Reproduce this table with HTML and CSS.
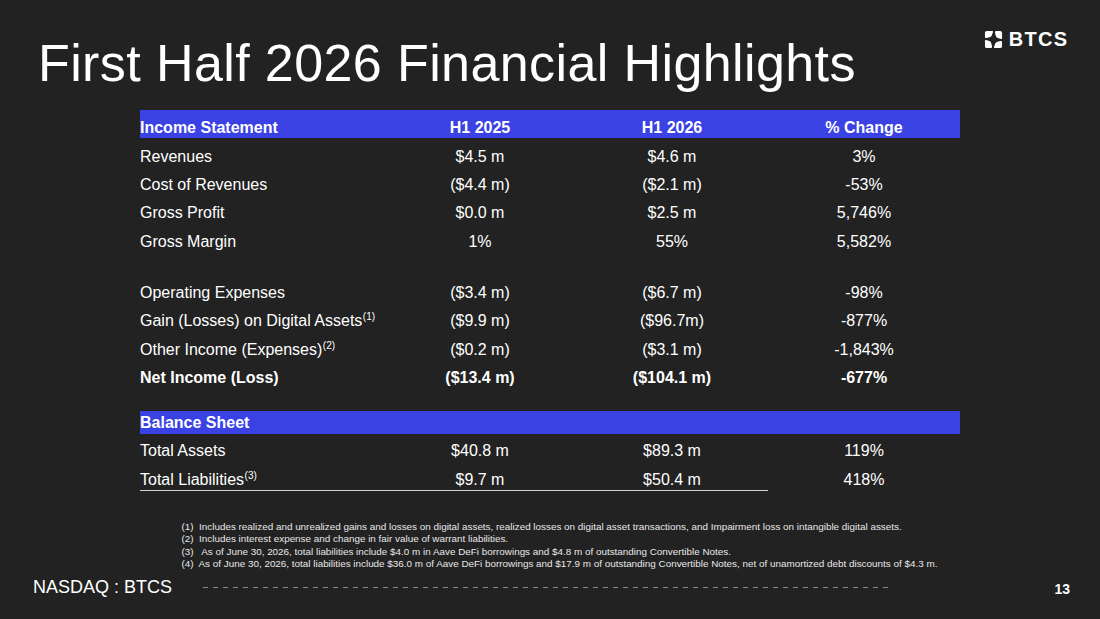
FILE: index.html
```html
<!DOCTYPE html>
<html lang="en">
<head>
<meta charset="utf-8">
<title>First Half 2026 Financial Highlights</title>
<link rel="stylesheet" href="styles.css">
</head>
<body>
<div class="slide">
  <header class="top">
    <h1 class="title">First Half 2026 Financial Highlights</h1>
    <div class="logo">
      <svg class="logo-mark" viewBox="0 0 20 20" width="19" height="19" aria-hidden="true">
        <g fill="#fff">
          <path d="M1 3 Q1 1 3 1 L8.8 1 Q9.8 1 9.5 2 L8.3 5.6 Q7.7 7.3 5.9 7.7 L2.6 8.5 Q1 8.8 1 7.2 Z"/>
          <path d="M1 3 Q1 1 3 1 L8.8 1 Q9.8 1 9.5 2 L8.3 5.6 Q7.7 7.3 5.9 7.7 L2.6 8.5 Q1 8.8 1 7.2 Z" transform="rotate(90 10 10)"/>
          <path d="M1 3 Q1 1 3 1 L8.8 1 Q9.8 1 9.5 2 L8.3 5.6 Q7.7 7.3 5.9 7.7 L2.6 8.5 Q1 8.8 1 7.2 Z" transform="rotate(180 10 10)"/>
          <path d="M1 3 Q1 1 3 1 L8.8 1 Q9.8 1 9.5 2 L8.3 5.6 Q7.7 7.3 5.9 7.7 L2.6 8.5 Q1 8.8 1 7.2 Z" transform="rotate(270 10 10)"/>
        </g>
      </svg>
      <span class="logo-text">BTCS</span>
    </div>
  </header>

  <section class="table">
    <div class="row head">
      <div>Income Statement</div><div class="c">H1 2025</div><div class="c">H1 2026</div><div class="c">% Change</div>
    </div>
    <div class="row first">
      <div>Revenues</div><div class="c">$4.5 m</div><div class="c">$4.6 m</div><div class="c">3%</div>
    </div>
    <div class="row">
      <div>Cost of Revenues</div><div class="c">($4.4 m)</div><div class="c">($2.1 m)</div><div class="c">-53%</div>
    </div>
    <div class="row">
      <div>Gross Profit</div><div class="c">$0.0 m</div><div class="c">$2.5 m</div><div class="c">5,746%</div>
    </div>
    <div class="row">
      <div>Gross Margin</div><div class="c">1%</div><div class="c">55%</div><div class="c">5,582%</div>
    </div>
    <div class="spacer-a"></div>
    <div class="row">
      <div>Operating Expenses</div><div class="c">($3.4 m)</div><div class="c">($6.7 m)</div><div class="c">-98%</div>
    </div>
    <div class="row">
      <div>Gain (Losses) on Digital Assets<sup>(1)</sup></div><div class="c">($9.9 m)</div><div class="c">($96.7m)</div><div class="c">-877%</div>
    </div>
    <div class="row">
      <div>Other Income (Expenses)<sup>(2)</sup></div><div class="c">($0.2 m)</div><div class="c">($3.1 m)</div><div class="c">-1,843%</div>
    </div>
    <div class="row bold">
      <div>Net Income (Loss)</div><div class="c">($13.4 m)</div><div class="c">($104.1 m)</div><div class="c">-677%</div>
    </div>
    <div class="spacer-b"></div>
    <div class="row subhead">
      <div>Balance Sheet</div><div></div><div></div><div></div>
    </div>
    <div class="row first">
      <div>Total Assets</div><div class="c">$40.8 m</div><div class="c">$89.3 m</div><div class="c">119%</div>
    </div>
    <div class="row last">
      <div class="rule">Total Liabilities<sup>(3)</sup></div><div class="c rule">$9.7 m</div><div class="c rule">$50.4 m</div><div class="c">418%</div>
    </div>
  </section>

  <section class="notes">
<p>(1)  Includes realized and unrealized gains and losses on digital assets, realized losses on digital asset transactions, and Impairment loss on intangible digital assets.</p>
<p>(2)  Includes interest expense and change in fair value of warrant liabilities.</p>
<p>(3)   As of June 30, 2026, total liabilities include $4.0 m in Aave DeFi borrowings and $4.8 m of outstanding Convertible Notes.</p>
<p>(4)  As of June 30, 2026, total liabilities include $36.0 m of Aave DeFi borrowings and $17.9 m of outstanding Convertible Notes, net of unamortized debt discounts of $4.3 m.</p>
  </section>

  <footer class="foot">
    <span class="ticker">NASDAQ : BTCS</span>
    <span class="dashes"></span>
    <span class="page">13</span>
  </footer>
</div>
</body>
</html>
```

FILE: styles.css
```css
html, body {
  margin: 0;
  padding: 0;
  background: #222222;
}

.slide {
  width: 1100px;
  height: 619px;
  background: #222222;
  color: #ffffff;
  font-family: "Liberation Sans", Arial, sans-serif;
  overflow: hidden;
}

.top {
  display: flex;
  justify-content: space-between;
  align-items: flex-start;
  padding: 28px 33px 0 38px;
  height: 82px;
}

.title {
  margin: 5px 0 0 0;
  font-size: 52px;
  font-weight: 400;
  line-height: 60px;
  letter-spacing: 0.4px;
  white-space: nowrap;
}

.logo {
  display: flex;
  align-items: center;
  gap: 6px;
  height: 20px;
  margin-top: 1px;
}

.logo-mark {
  display: block;
}

.logo-text {
  font-size: 20px;
  font-weight: 700;
  letter-spacing: 1.3px;
  line-height: 20px;
  margin-right: -1.3px;
}

.table {
  margin: 0 0 0 140px;
  width: 820px;
  font-size: 16px;
}

.row {
  display: grid;
  grid-template-columns: 244px 192px 192px 192px;
  height: 28.3px;
  line-height: 28.3px;
  white-space: nowrap;
}

.row .c {
  text-align: center;
}

.row.head {
  background: #3b42e4;
  font-weight: 700;
  height: 28px;
  line-height: 21px;
  padding-top: 7px;
  box-sizing: border-box;
}

.row.first {
  margin-top: 4.7px;
}

.row.subhead {
  background: #3b42e4;
  font-weight: 700;
  height: 23px;
  line-height: 23px;
}

.row.subhead + .row.first {
  margin-top: 3.3px;
}

.row.bold {
  font-weight: 700;
}

.row.last {
  height: 24.4px;
}

.row.last .rule {
  border-bottom: 1px solid #d0d0d0;
  box-sizing: border-box;
  height: 25px;
}

.spacer-a {
  height: 23.3px;
}

.spacer-b {
  height: 18.6px;
}

sup {
  font-size: 10px;
  line-height: 0;
  vertical-align: 6px;
  margin-left: 0.5px;
}

.notes {
  margin: 31px 0 0 181.5px;
  font-size: 9.9px;
  line-height: 12.3px;
  color: #e8e8e8;
}

.notes p {
  margin: 0;
  white-space: pre;
}

.foot {
  display: flex;
  align-items: flex-start;
  margin-top: 6px;
  padding: 0 30px 0 33px;
}

.ticker {
  font-size: 18px;
  line-height: 22px;
  white-space: nowrap;
}

.dashes {
  flex: 1;
  height: 1px;
  margin: 11px 161px 0 31px;
  background: repeating-linear-gradient(to right, #8a8a8a 0 5px, transparent 5px 10px);
}

.page {
  font-size: 14px;
  font-weight: 700;
  line-height: 22px;
  margin-top: 2px;
}
```
